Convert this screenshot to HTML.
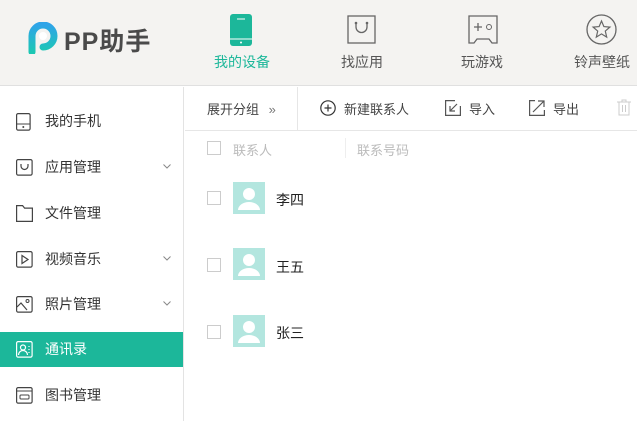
<!DOCTYPE html><html><head><meta charset="utf-8"><style>
*{margin:0;padding:0;box-sizing:border-box}
body{width:637px;height:421px;overflow:hidden;background:#fff;font-family:"Liberation Sans","Noto Sans CJK SC",sans-serif;position:relative;color:#333}
.hd{position:absolute;left:0;top:0;width:637px;height:86px;background:#f4f3f1;border-bottom:1px solid #e0e0e0}
.a{position:absolute}
.nav{position:absolute;top:0;width:100px;text-align:center}
.nav .t{position:absolute;top:52px;width:100px;font-size:14px;color:#555}
.side{position:absolute;left:0;top:87px;width:184px;height:334px;border-right:1px solid #e3e3e3}
.it{position:absolute;left:0;width:183px;height:35px;font-size:14px;color:#333}
.it span{position:absolute;left:45px;top:7px}
.it svg{position:absolute;left:16px;top:9px}
.it svg.ch{left:163px;top:14px}
.cb{position:absolute;width:14px;height:14px;border:1px solid #ccc;background:#fff}
.av{position:absolute;width:32px;height:32px;background:#b3e6df;overflow:hidden}
.nm{position:absolute;font-size:14px;color:#222}
.tb{position:absolute;font-size:13px;color:#444}
</style></head><body>
<div class="hd"></div>
<svg class="a" style="left:28px;top:22px" width="30" height="32" viewBox="0 0 30 32"><defs><linearGradient id="g" x1="0" y1="0" x2="0" y2="1"><stop offset="0" stop-color="#2fa4e8"/><stop offset="1" stop-color="#1cc7b3"/></linearGradient></defs><path d="M4 30V14A11 11 0 1 1 15 25" fill="none" stroke="url(#g)" stroke-width="7" stroke-linecap="round"/><circle cx="15" cy="14" r="4" fill="#fff"/></svg>
<div class="a" style="left:64px;top:22px;font-size:25px;color:#4a4a4a;font-weight:bold;letter-spacing:1px">PP助手</div>
<div class="nav" style="left:192px"><svg class="a" style="left:38px;top:14px" width="22" height="32"><rect width="22" height="32" rx="3" fill="#1cb79a"/><line x1="7" y1="5" x2="15" y2="5" stroke="#fff"/><line x1="0" y1="25" x2="22" y2="25" stroke="#fff"/><circle cx="11" cy="28.5" r="1" fill="#fff"/></svg><div class="t" style="color:#1cb79a">我的设备</div></div>
<div class="nav" style="left:312px"><svg class="a" style="left:35px;top:15px" width="29" height="29"><rect x="1" y="1" width="27" height="27" fill="none" stroke="#666" stroke-width="1.3"/><path d="M9 9v3a5.5 5.5 0 0 0 11 0V9" fill="none" stroke="#666" stroke-width="1.3"/><circle cx="9" cy="8" r="1.3" fill="#666"/><circle cx="20" cy="8" r="1.3" fill="#666"/></svg><div class="t">找应用</div></div>
<div class="nav" style="left:432px"><svg class="a" style="left:36px;top:15px" width="30" height="29"><path d="M1 1h28v27h-5l-3-4H9l-3 4H1z" fill="none" stroke="#666" stroke-width="1.3"/><path d="M6 12h8M10 8v8" stroke="#666" stroke-width="1.3"/><circle cx="21" cy="12" r="2.5" fill="none" stroke="#666"/></svg><div class="t">玩游戏</div></div>
<div class="nav" style="left:552px"><svg class="a" style="left:34px;top:14px" width="31" height="31"><circle cx="15.5" cy="15.5" r="14.5" fill="none" stroke="#666" stroke-width="1.3"/><path d="M15.5 7l2.4 5.6 6 .5-4.6 4 1.4 6-5.2-3.2-5.2 3.2 1.4-6-4.6-4 6-.5z" fill="none" stroke="#666" stroke-width="1.2"/></svg><div class="t">铃声壁纸</div></div>

<div class="side">
<div class="it" style="top:17px"><svg width="15" height="18"><rect x=".6" y=".6" width="13.5" height="16.5" rx="1.5" fill="none" stroke="#444" stroke-width="1.2"/><line x1="1" y1="11" x2="14" y2="11" stroke="#444"/><circle cx="7.3" cy="14" r="1" fill="#444"/></svg><span>我的手机</span></div>
<div class="it" style="top:63px"><svg width="17" height="17"><rect x=".6" y=".6" width="15.5" height="15.5" rx="1.5" fill="none" stroke="#444" stroke-width="1.2"/><path d="M5 5v2a3.4 3.4 0 0 0 7 0V5" fill="none" stroke="#444" stroke-width="1.2"/></svg><span>应用管理</span><svg class="ch" width="8" height="5"><path d="M.5 .5L4 4 7.5.5" fill="none" stroke="#888"/></svg></div>
<div class="it" style="top:109px"><svg width="17" height="17"><path d="M.6 16.4V.6h6l2 2.5h7.8v13.3z" fill="none" stroke="#444" stroke-width="1.2"/></svg><span>文件管理</span></div>
<div class="it" style="top:155px"><svg width="17" height="17"><rect x=".6" y=".6" width="15.5" height="15.5" rx="1.5" fill="none" stroke="#444" stroke-width="1.2"/><path d="M6 4.5v8l6-4z" fill="none" stroke="#444" stroke-width="1.2"/></svg><span>视频音乐</span><svg class="ch" width="8" height="5"><path d="M.5 .5L4 4 7.5.5" fill="none" stroke="#888"/></svg></div>
<div class="it" style="top:200px"><svg width="17" height="17"><rect x=".6" y=".6" width="15.5" height="15.5" rx="1.5" fill="none" stroke="#444" stroke-width="1.2"/><path d="M1 11l4-4 6 7" fill="none" stroke="#444" stroke-width="1.2"/><circle cx="11.5" cy="5" r="1.5" fill="none" stroke="#444"/></svg><span>照片管理</span><svg class="ch" width="8" height="5"><path d="M.5 .5L4 4 7.5.5" fill="none" stroke="#888"/></svg></div>
<div class="it" style="top:245px;background:#1cb79a;color:#fff"><svg width="17" height="17"><rect x=".6" y=".6" width="15.5" height="15.5" rx="1.5" fill="none" stroke="#fff" stroke-width="1.2"/><circle cx="7" cy="6.5" r="2.5" fill="none" stroke="#fff" stroke-width="1.2"/><path d="M2.5 14a4.5 4.5 0 0 1 9 0M13 5v1M13 8v1M13 11v1" fill="none" stroke="#fff" stroke-width="1.2"/></svg><span>通讯录</span></div>
<div class="it" style="top:291px"><svg width="17" height="17"><rect x=".6" y=".6" width="15.5" height="15.5" rx="1.5" fill="none" stroke="#444" stroke-width="1.2"/><line x1="1" y1="4" x2="16" y2="4" stroke="#444"/><rect x="4" y="8" width="9" height="4" rx="1" fill="none" stroke="#444"/></svg><span>图书管理</span></div>
</div>

<div class="a" style="left:185px;top:130px;width:452px;height:1px;background:#e6e6e6"></div>
<div class="a" style="left:297px;top:87px;width:1px;height:43px;background:#e6e6e6"></div>
<div class="tb" style="left:207px;top:99px">展开分组 <span style="margin-left:6px;color:#777">»</span></div>
<svg class="a" style="left:320px;top:100px" width="16" height="16"><circle cx="8" cy="8" r="7.2" fill="none" stroke="#333" stroke-width="1.2"/><path d="M8 4.5v7M4.5 8h7" stroke="#333" stroke-width="1.2"/></svg>
<div class="tb" style="left:344px;top:99px">新建联系人</div>
<svg class="a" style="left:445px;top:100px" width="16" height="16"><path d="M10 .6H.6v14.8h14.8V6" fill="none" stroke="#555" stroke-width="1.2"/><path d="M12 4L5 11M5 6v5h5" fill="none" stroke="#555" stroke-width="1.2"/></svg>
<div class="tb" style="left:469px;top:99px">导入</div>
<svg class="a" style="left:529px;top:100px" width="16" height="16"><path d="M6 .6H.6v14.8h14.8V10" fill="none" stroke="#555" stroke-width="1.2"/><path d="M4 12L15 1M9 1h6v6" fill="none" stroke="#555" stroke-width="1.2"/></svg>
<div class="tb" style="left:553px;top:99px">导出</div>
<svg class="a" style="left:617px;top:99px" width="14" height="17"><path d="M0 3h14M5 3V1h4v2M2 3v13h10V3M5.5 6v7M8.5 6v7" fill="none" stroke="#ccc"/></svg>

<div class="cb" style="left:207px;top:141px"></div>
<div class="a" style="left:233px;top:140px;font-size:13px;color:#bbb">联系人</div>
<div class="a" style="left:345px;top:138px;width:1px;height:20px;background:#eee"></div>
<div class="a" style="left:357px;top:140px;font-size:13px;color:#bbb">联系号码</div>

<div class="cb" style="left:207px;top:191px"></div>
<div class="av" style="left:233px;top:182px"><svg width="32" height="32"><circle cx="16" cy="12" r="6" fill="#fff"/><path d="M5 28a11 8 0 0 1 22 0z" fill="#fff"/></svg></div>
<div class="nm" style="left:276px;top:190px">李四</div>
<div class="cb" style="left:207px;top:258px"></div>
<div class="av" style="left:233px;top:248px"><svg width="32" height="32"><circle cx="16" cy="12" r="6" fill="#fff"/><path d="M5 28a11 8 0 0 1 22 0z" fill="#fff"/></svg></div>
<div class="nm" style="left:276px;top:257px">王五</div>
<div class="cb" style="left:207px;top:325px"></div>
<div class="av" style="left:233px;top:315px"><svg width="32" height="32"><circle cx="16" cy="12" r="6" fill="#fff"/><path d="M5 28a11 8 0 0 1 22 0z" fill="#fff"/></svg></div>
<div class="nm" style="left:276px;top:323px">张三</div>
</body></html>
